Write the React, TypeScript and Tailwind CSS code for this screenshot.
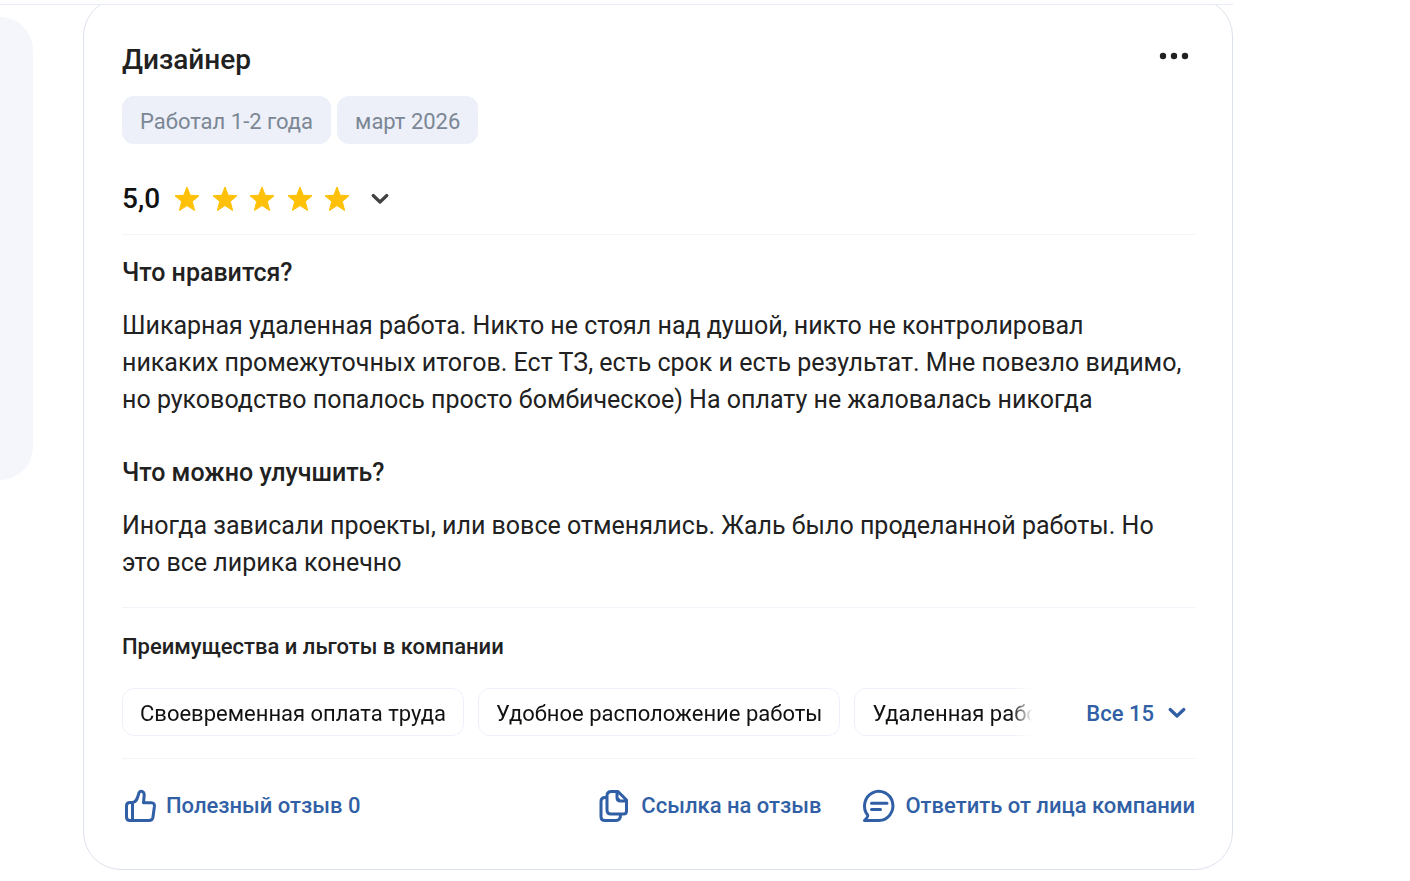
import type { ReactNode } from "react";

const benefits = ["Своевременная оплата труда", "Удобное расположение работы", "Удаленная работа"];

function Star() {
  return (
    <svg width="26" height="26" viewBox="0 0 26 26" fill="#ffc107" aria-hidden="true">
      <path
        d="M13 1 L16.2 9.2 L25 9.8 L18.3 15.4 L20.6 24.5 L13 19.6 L5.4 24.5 L7.7 15.4 L1 9.8 L9.8 9.2 Z"
        stroke="#ffc107"
        strokeWidth="1"
        strokeLinejoin="round"
      />
    </svg>
  );
}

function Chevron() {
  return (
    <svg width="18" height="12" viewBox="0 0 18 12" fill="none" stroke="currentColor" strokeWidth="3.2" strokeLinecap="round" strokeLinejoin="round" aria-hidden="true">
      <path d="M2.2 2.5 L9 9 L15.8 2.5" />
    </svg>
  );
}

function ActionIcon({ children }: { children: ReactNode }) {
  return (
    <svg width="36" height="36" viewBox="0 0 36 36" fill="none" stroke="currentColor" strokeWidth="3" strokeLinecap="round" strokeLinejoin="round" className="shrink-0" aria-hidden="true">
      {children}
    </svg>
  );
}

function Section({ title, children }: { title: string; children: ReactNode }) {
  return (
    <section>
      <h3 className="text-[25px] leading-[38px] font-medium">{title}</h3>
      <p className="mt-[15px] text-[25px] leading-[37px]">{children}</p>
    </section>
  );
}

export default function App() {
  return (
    <div className="overflow-hidden bg-white pr-[177px] font-[Roboto,sans-serif] text-[#212121]">
      <header className="relative z-10 h-[5px] border-b border-[#e8ecf6] bg-white" />
      <main className="flex items-start gap-[50px]">
        <aside className="mt-3 h-[463px] w-[33px] shrink-0 rounded-r-[38px] bg-[#f4f6fc]" />
        <article className="-mt-[7px] min-w-0 flex-1 rounded-[38px] border border-[#dce2ec] pt-[42px] pr-[37px] pb-[44px] pl-[38px]">
          <div className="flex items-start justify-between">
            <h2 className="text-[28px] leading-[38px] font-medium">Дизайнер</h2>
            <button type="button" aria-label="Ещё" className="mt-[7px] mr-[6px] flex h-4 items-center">
              <svg width="30" height="8" viewBox="0 0 30 8" fill="currentColor" aria-hidden="true">
                <circle cx="4" cy="4" r="3.2" />
                <circle cx="15" cy="4" r="3.2" />
                <circle cx="26" cy="4" r="3.2" />
              </svg>
            </button>
          </div>
          <div className="mt-[17px] flex gap-[6px] text-[22px] leading-[44px] text-[#7b8794]">
            <span className="rounded-xl bg-[#edf0f9] px-[18px] pt-1">Работал 1-2 года</span>
            <span className="rounded-xl bg-[#edf0f9] px-[18px] pt-1">март 2026</span>
          </div>
          <div className="mt-9 flex h-[38px] items-center">
            <span className="text-[28px] font-medium text-[#111111]">5,0</span>
            <div className="ml-[14px] flex w-[176px] justify-between" role="img" aria-label="5 из 5">
              <Star />
              <Star />
              <Star />
              <Star />
              <Star />
            </div>
            <button type="button" aria-label="Показать оценки" className="ml-[21px] text-[#424242]">
              <Chevron />
            </button>
          </div>
          <hr className="mt-4 mb-[19px] border-[#f3f4fa]" />
          <div className="flex flex-col gap-9">
            <Section title="Что нравится?">
              Шикарная удаленная работа. Никто не стоял над душой, никто не контролировал
              <br />
              никаких промежуточных итогов. Ест ТЗ, есть срок и есть результат. Мне повезло видимо, но руководство попалось просто бомбическое) На оплату не жаловалась никогда
            </Section>
            <Section title="Что можно улучшить?">
              Иногда зависали проекты, или вовсе отменялись. Жаль было проделанной работы. Но это все лирика конечно
            </Section>
          </div>
          <hr className="mt-[26px] mb-[22px] border-[#f3f4fa]" />
          <h3 className="text-[22px] leading-[34px] font-medium">Преимущества и льготы в компании</h3>
          <div className="mt-6 flex items-center justify-between">
            <ul className="flex w-[910px] min-w-0 gap-[14px] overflow-hidden mask-r-from-[890px] mask-r-to-[910px] text-[22px] leading-[42px] whitespace-nowrap text-[#111111]">
              {benefits.map((b) => (
                <li key={b} className="shrink-0 rounded-xl border border-[#edf0f8] px-[17px] pt-1">{b}</li>
              ))}
            </ul>
            <button type="button" className="mr-[9px] flex shrink-0 items-center gap-[14px] pt-[2px] text-[22px] font-medium text-[#315fa6]">
              Все 15
              <Chevron />
            </button>
          </div>
          <hr className="mt-[22px] mb-7 border-[#f3f4fa]" />
          <footer className="flex items-center gap-10 text-[22px] leading-[38px] font-medium text-[#315fa6]">
            <button type="button" className="mr-auto flex items-center gap-2">
              <ActionIcon>
                <path d="M10.5 14.5 V32.5 M10.5 14.5 H8 Q4.5 14.5 4.5 18 V29 Q4.5 32.5 8 32.5 H27 Q30.3 32.5 30.9 29.5 L32.4 18.5 Q32.8 14.7 29.3 14.7 H21.5 L22.2 7 C22.2 3 18 2.2 17 4.8 C15.5 9.5 14.8 14.5 10.5 14.5" />
              </ActionIcon>
              Полезный отзыв 0
            </button>
            <button type="button" className="flex items-center gap-2">
              <ActionIcon>
                <path d="M14.5 3.5 H21 L29.5 12 V23 Q29.5 26 26.5 26 H14 Q10 26 10 22 V7.5 Q10 3.5 14.5 3.5 Z M20 4 V9.5 Q20 13 23.5 13 H29 M20 10 L23 13 M10 9.5 H8 Q4 9.5 4 13.5 V28.5 Q4 32.5 8 32.5 H19 Q23.5 32.5 23.5 27" />
              </ActionIcon>
              Ссылка на отзыв
            </button>
            <button type="button" className="flex items-center gap-2">
              <ActionIcon>
                <path d="M3.5 32.5 C5.5 30.5 7.5 28.5 6.6 27 A14.2 14.6 0 1 1 18 32.5 Z M10.5 15.2 H26 M10.5 21.4 H19.5" />
              </ActionIcon>
              Ответить от лица компании
            </button>
          </footer>
        </article>
      </main>
    </div>
  );
}
